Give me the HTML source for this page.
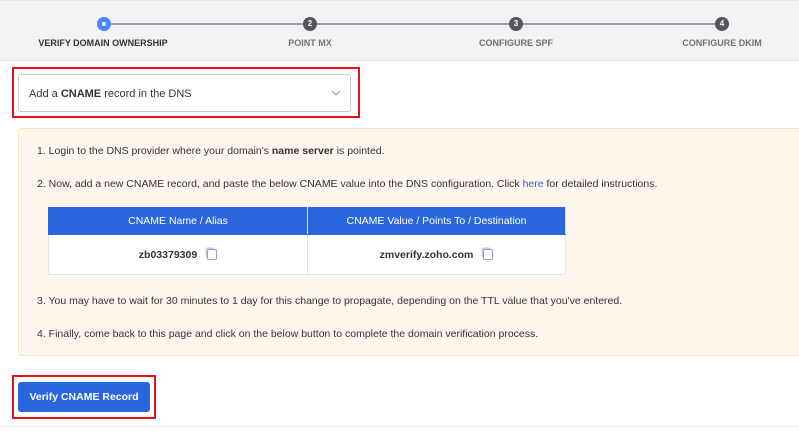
<!DOCTYPE html>
<html><head><style>
*{margin:0;padding:0;box-sizing:border-box}
body{width:799px;height:435px;background:#fff;font-family:"Liberation Sans",sans-serif;color:#333;position:relative;overflow:hidden;font-size:10.5px}
.hdr{position:absolute;left:0;top:0;width:799px;height:61px;background:#f1f2f4;border-top:1px solid #e4e5e8;border-bottom:1px solid #e6e7ea}
.line{position:absolute;top:22px;left:104px;width:618px;height:2px;background:#9b9ca2}
.c{position:absolute;top:16px;width:14px;height:14px;border-radius:50%;background:#55565c;color:#fff;font-size:8px;font-weight:bold;text-align:center;line-height:14px}
.c.a{background:#4a86f4}
.c.a:after{content:"";position:absolute;left:5px;top:5px;width:4px;height:4px;border-radius:50%;background:#fff}
.lb{position:absolute;top:37px;font-size:9px;font-weight:bold;color:#707178;transform:translateX(-50%);white-space:nowrap}
.red{position:absolute;border:2px solid #e3111b}
.sel{position:absolute;left:18px;top:74px;width:333px;height:38px;border:1px solid #c9cacd;border-radius:3px;font-size:11px;padding:13px 0 0 10px;color:#333}
.info{position:absolute;left:18px;top:128px;width:790px;height:228px;background:#fef6ec;border:1px solid #fbe3bf;border-radius:3px}
.p{position:absolute;left:37px;font-size:10.5px;color:#333;white-space:nowrap}
table{position:absolute;left:48px;top:207px;width:518px;border-collapse:collapse;font-size:10.5px}
th{background:#2a67dd;color:#fff;font-weight:normal;height:27px;border:1px solid #2a67dd;border-right:1px solid #dfe3ea}
td{background:#fff;height:40px;text-align:center;font-weight:bold;border:1px solid #e5e6e9}
.cp{display:inline-block;width:10px;height:11px;border:1.5px solid #8e9be6;border-radius:2px;margin-left:10px;vertical-align:middle;box-shadow:-2px -2px 0 -0.5px #c8cef3}
.btn{position:absolute;left:18px;top:382px;width:132px;height:30px;background:#2a67dd;border-radius:3px;color:#fff;font-weight:bold;font-size:10.5px;text-align:center;line-height:30px}
</style></head><body>
<div class="hdr">
<div class="line"></div>
<div class="c a" style="left:97px"></div>
<div class="c" style="left:303px">2</div>
<div class="c" style="left:509px">3</div>
<div class="c" style="left:715px">4</div>
<div class="lb" style="left:103px;color:#333">VERIFY DOMAIN OWNERSHIP</div>
<div class="lb" style="left:310px">POINT MX</div>
<div class="lb" style="left:516px">CONFIGURE SPF</div>
<div class="lb" style="left:722px">CONFIGURE DKIM</div>
</div>
<div class="red" style="left:12px;top:67px;width:348px;height:51px"></div>
<div class="sel">Add a <b>CNAME</b> record in the DNS
<svg style="position:absolute;left:312px;top:15px" width="10" height="6" viewBox="0 0 10 6"><path d="M1 1l4 4 4-4" fill="none" stroke="#999" stroke-width="1.2"/></svg></div>
<div class="info"></div>
<div class="p" style="top:145px">1. Login to the DNS provider where your domain's <b>name server</b> is pointed.</div>
<div class="p" style="top:178px">2. Now, add a new CNAME record, and paste the below CNAME value into the DNS configuration. Click <span style="color:#2a67dd">here</span> for detailed instructions.</div>
<table><tr><th style="width:259px">CNAME Name / Alias</th><th>CNAME Value / Points To / Destination</th></tr>
<tr><td>zb03379309<span class="cp"></span></td><td>zmverify.zoho.com<span class="cp"></span></td></tr></table>
<div class="p" style="top:295px">3. You may have to wait for 30 minutes to 1 day for this change to propagate, depending on the TTL value that you've entered.</div>
<div class="p" style="top:328px">4. Finally, come back to this page and click on the below button to complete the domain verification process.</div>
<div class="red" style="left:12px;top:375px;width:144px;height:44px"></div>
<div class="btn">Verify CNAME Record</div>
<div style="position:absolute;left:0;top:426px;width:799px;height:1px;background:#eceef0"></div>
</body></html>
